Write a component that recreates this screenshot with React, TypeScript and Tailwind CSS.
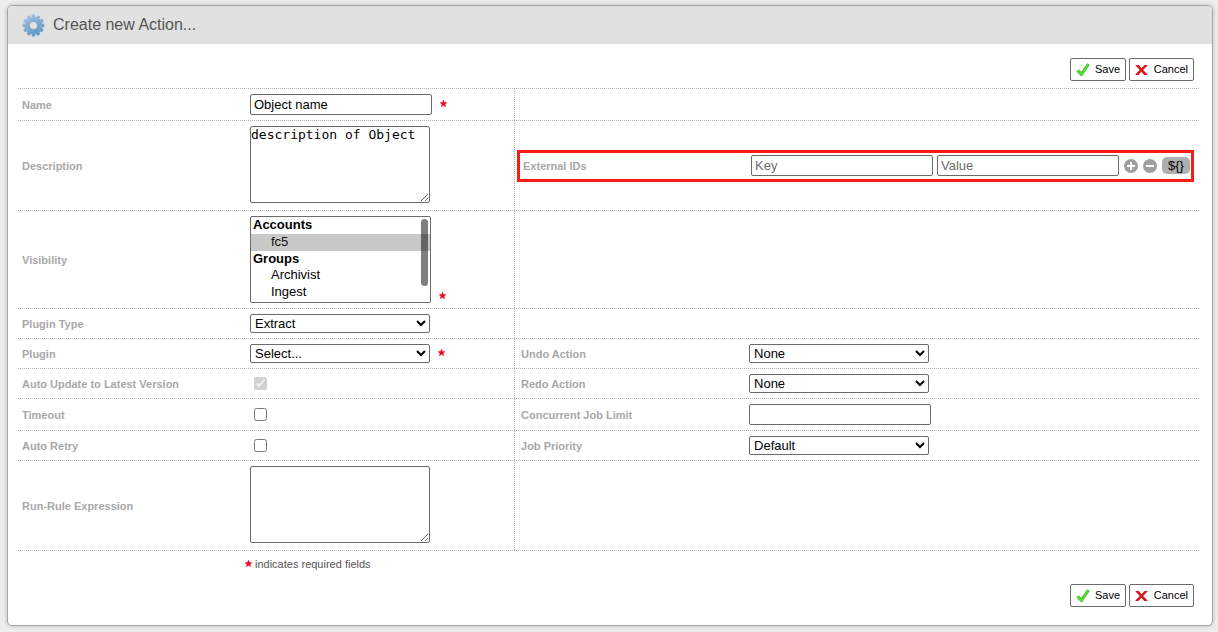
import { useState } from 'react';
import type { ReactNode } from 'react';

const TEXT_INPUT =
  'h-[21px] w-[182px] shrink-0 rounded-[2px] border border-[#6b6b6b] bg-white px-[3px] text-[13px] text-black placeholder:text-[#6b6b6b]';
const SELECT =
  'h-[19px] w-[180px] rounded-[2px] border border-[#6b6b6b] bg-white text-[13px] text-black';
const TEXTAREA =
  'mb-[2px] block h-[77px] w-[180px] resize rounded-[2px] border border-[#6b6b6b] bg-white font-["DejaVu_Sans_Mono",monospace] text-[13px] leading-4 text-black';

const GEAR_TEETH = [0, 30, 60, 90, 120, 150, 180, 210, 240, 270, 300, 330];

function GearIcon() {
  return (
    <svg width="23" height="23" viewBox="0 0 24 24" aria-hidden="true">
      <defs>
        <linearGradient id="gear" gradientUnits="userSpaceOnUse" x1="6" y1="1" x2="16" y2="23">
          <stop offset="0" stopColor="#a3c0dc" />
          <stop offset="1" stopColor="#5b97c9" />
        </linearGradient>
        <mask id="gear-shape">
          {GEAR_TEETH.map((angle) => (
            <path key={angle} d="M9.900 4.500 10.300.6h3.400l.4 3.900Z" fill="#fff" transform={`rotate(${angle} 12 12)`} />
          ))}
          <circle cx="12" cy="12" r="9" fill="#fff" />
          <circle cx="12" cy="12" r="4" fill="#000" />
        </mask>
      </defs>
      <rect width="24" height="24" fill="url(#gear)" mask="url(#gear-shape)" />
      <circle cx="12" cy="12" r="4.200" fill="none" stroke="#8098ae" strokeWidth="0.6" />
    </svg>
  );
}

function CheckIcon() {
  return (
    <svg width="14" height="14" viewBox="0 0 14 14" aria-hidden="true">
      <path
        d="M.8 8.400 2.900 6.800 5.200 9.300 11.300.8 13.300 2 6 12.800 4.900 12.800Z"
        fill="#56e02d"
        stroke="#3fae26"
        strokeWidth="0.7"
      />
    </svg>
  );
}

function CrossIcon() {
  return (
    <svg width="13" height="12" viewBox="0 0 13 12" aria-hidden="true">
      <path
        d="M.5 1h3.300l2.700 3.200L9.600 1h2.900v.6L8.100 5.900l4.300 4.300v.8H9.200L6.400 7.700 3.400 11H.5v-.7l4.300-4.400L.5 1.600Z"
        fill="#d8141c"
      />
    </svg>
  );
}

function Star() {
  return (
    <svg width="7" height="7" viewBox="0 0 10 10" className="mb-[2px] shrink-0" aria-hidden="true">
      <path
        d="M5 .3 6.300 3.500 9.700 3.800 7.100 6 8 9.500 5 7.600 2 9.500 2.900 6 .3 3.800 3.700 3.500Z"
        fill="#ec0b23"
        stroke="#ec0b23"
        strokeWidth="0.8"
      />
    </svg>
  );
}

function FormButtons() {
  const button =
    'flex h-[23px] items-center justify-between rounded-[2px] border border-[#6b6b6b] bg-white px-[5px] text-[11px] text-black';
  return (
    <div className="flex justify-end gap-[3px] pr-[5px]">
      <button type="submit" className={`${button} w-14`}>
        <CheckIcon />
        Save
      </button>
      <button type="button" className={`${button} w-[65px]`}>
        <CrossIcon />
        Cancel
      </button>
    </div>
  );
}

type FieldProps = {
  label: string;
  htmlFor: string;
  children: ReactNode;
};

function Field({ label, htmlFor, children }: FieldProps) {
  return (
    <div className="flex w-full items-center">
      <label htmlFor={htmlFor} className="w-57 shrink-0 text-[11px] leading-4 font-bold text-[#a8a8a8]">
        {label}
      </label>
      {children}
    </div>
  );
}

function Row({ left, right }: { left: ReactNode; right?: ReactNode }) {
  return (
    <div className="grid grid-cols-[42fr_58fr] border-t border-dotted border-[#b5b5b5]">
      <div className="flex items-center py-[5px] pl-1">{left}</div>
      <div className="flex items-center border-l border-dotted border-[#b5b5b5] pl-[6px]">{right}</div>
    </div>
  );
}

function ActionSelect({ id, option }: { id: string; option: string }) {
  return (
    <select id={id} className={SELECT}>
      <option>{option}</option>
    </select>
  );
}

function ExternalIds() {
  return (
    <div className="-ml-1 mr-[5px] flex h-8 w-full items-center border-3 border-[#fb1c17] pl-[3px]">
      <Field label="External IDs" htmlFor="external-key">
        <div className="flex items-center">
          <input id="external-key" placeholder="Key" className={TEXT_INPUT} />
          <input aria-label="External ID value" placeholder="Value" className={`${TEXT_INPUT} ml-1`} />
          <button type="button" aria-label="Add external ID" className="ml-[5px]">
            <svg width="14" height="14" viewBox="0 0 14 14">
              <circle cx="7" cy="7" r="7" fill="#a0a0a0" />
              <path d="M7 3v8M3 7h8" stroke="#fff" strokeWidth="2" />
            </svg>
          </button>
          <button type="button" aria-label="Remove external ID" className="ml-[5px]">
            <svg width="14" height="14" viewBox="0 0 14 14">
              <circle cx="7" cy="7" r="7" fill="#a0a0a0" />
              <path d="M3 7h8" stroke="#fff" strokeWidth="2" />
            </svg>
          </button>
          <button type="button" className="ml-[5px] h-[17px] w-7 rounded-[5px] bg-[#aeaeae] text-[13px] leading-4 text-black">
            {'${}'}
          </button>
        </div>
      </Field>
    </div>
  );
}

function VisibilityList() {
  const [selected, setSelected] = useState(['fc5']);

  return (
    <div className="relative">
      <select
        id="visibility"
        multiple
        size={5}
        value={selected}
        onChange={(e) => setSelected(Array.from(e.target.selectedOptions, (o) => o.value))}
        className="block h-[87px] w-[181px] rounded-[2px] border border-[#6b6b6b] bg-white text-[13px] leading-[17px] text-black [scrollbar-width:none] [&_optgroup]:p-0 [&_optgroup]:leading-[17px] [&_option]:h-[17px] [&_option]:min-h-0 [&_option]:py-0 [&_option]:pr-0 [&_option]:pl-5 [&_option]:leading-[17px]"
      >
        <optgroup label="Accounts">
          <option value="fc5" className="checked:bg-[#c8c8c8]">fc5</option>
        </optgroup>
        <optgroup label="Groups">
          <option value="archivist">Archivist</option>
          <option value="ingest">Ingest</option>
        </optgroup>
      </select>
      <span className="pointer-events-none absolute top-[3px] right-[3px] h-[67px] w-[7px] rounded-full bg-black/50" />
    </div>
  );
}

export default function App() {
  const [name, setName] = useState('Object name');
  const [description, setDescription] = useState('description of Object');

  return (
    <div className='min-h-screen bg-[#ededed] pt-[5px] pr-[5px] pb-[6px] pl-[7px] font-["Liberation_Sans",Arial,sans-serif]'>
      <main className="overflow-hidden rounded-[5px] border border-[#a5a5a5] bg-white shadow-[0_0_4px_#bbbbbb]">
        <header className="flex h-[38px] items-center gap-2 bg-[#e1e1e1] pl-[14px]">
          <GearIcon />
          <h1 className="text-base leading-5 text-[#555555]">Create new Action...</h1>
        </header>

        <form className="pt-[14px] pr-[13px] pb-[18px] pl-[10px]" onSubmit={(e) => e.preventDefault()}>
          <FormButtons />

          <div className="mt-[7px] border-b border-dotted border-[#b5b5b5]">
            <Row
              left={
                <Field label="Name" htmlFor="name">
                  <input id="name" value={name} onChange={(e) => setName(e.target.value)} className={`${TEXT_INPUT} mr-2`} />
                  <Star />
                </Field>
              }
            />
            <Row
              left={
                <Field label="Description" htmlFor="description">
                  <textarea
                    id="description"
                    value={description}
                    onChange={(e) => setDescription(e.target.value)}
                    className={TEXTAREA}
                  />
                </Field>
              }
              right={<ExternalIds />}
            />
            <Row
              left={
                <Field label="Visibility" htmlFor="visibility">
                  <div className="flex items-end gap-2">
                    <VisibilityList />
                    <div className="pb-[2px]">
                      <Star />
                    </div>
                  </div>
                </Field>
              }
            />
            <Row
              left={
                <Field label="Plugin Type" htmlFor="plugin-type">
                  <ActionSelect id="plugin-type" option="Extract" />
                </Field>
              }
            />
            <Row
              left={
                <Field label="Plugin" htmlFor="plugin">
                  <div className="flex items-center gap-2">
                    <ActionSelect id="plugin" option="Select..." />
                    <Star />
                  </div>
                </Field>
              }
              right={
                <Field label="Undo Action" htmlFor="undo-action">
                  <ActionSelect id="undo-action" option="None" />
                </Field>
              }
            />
            <Row
              left={
                <Field label="Auto Update to Latest Version" htmlFor="auto-update">
                  <input id="auto-update" type="checkbox" defaultChecked disabled className="ml-1 size-[13px]" />
                </Field>
              }
              right={
                <div className="flex w-full py-[5px]">
                  <Field label="Redo Action" htmlFor="redo-action">
                    <ActionSelect id="redo-action" option="None" />
                  </Field>
                </div>
              }
            />
            <Row
              left={
                <Field label="Timeout" htmlFor="timeout">
                  <input id="timeout" type="checkbox" className="ml-1 size-[13px]" />
                </Field>
              }
              right={
                <div className="flex w-full py-[5px]">
                  <Field label="Concurrent Job Limit" htmlFor="job-limit">
                    <input id="job-limit" className={TEXT_INPUT} />
                  </Field>
                </div>
              }
            />
            <Row
              left={
                <Field label="Auto Retry" htmlFor="auto-retry">
                  <input id="auto-retry" type="checkbox" className="ml-1 size-[13px]" />
                </Field>
              }
              right={
                <div className="flex w-full py-[5px]">
                  <Field label="Job Priority" htmlFor="job-priority">
                    <ActionSelect id="job-priority" option="Default" />
                  </Field>
                </div>
              }
            />
            <Row
              left={
                <Field label="Run-Rule Expression" htmlFor="run-rule">
                  <textarea id="run-rule" className={TEXTAREA} />
                </Field>
              }
            />
          </div>

          <p className="mt-[5px] mb-3 flex items-center gap-[3px] pl-[227px] text-[11px] leading-4 text-[#555555]">
            <Star />
            indicates required fields
          </p>

          <FormButtons />
        </form>
      </main>
    </div>
  );
}
